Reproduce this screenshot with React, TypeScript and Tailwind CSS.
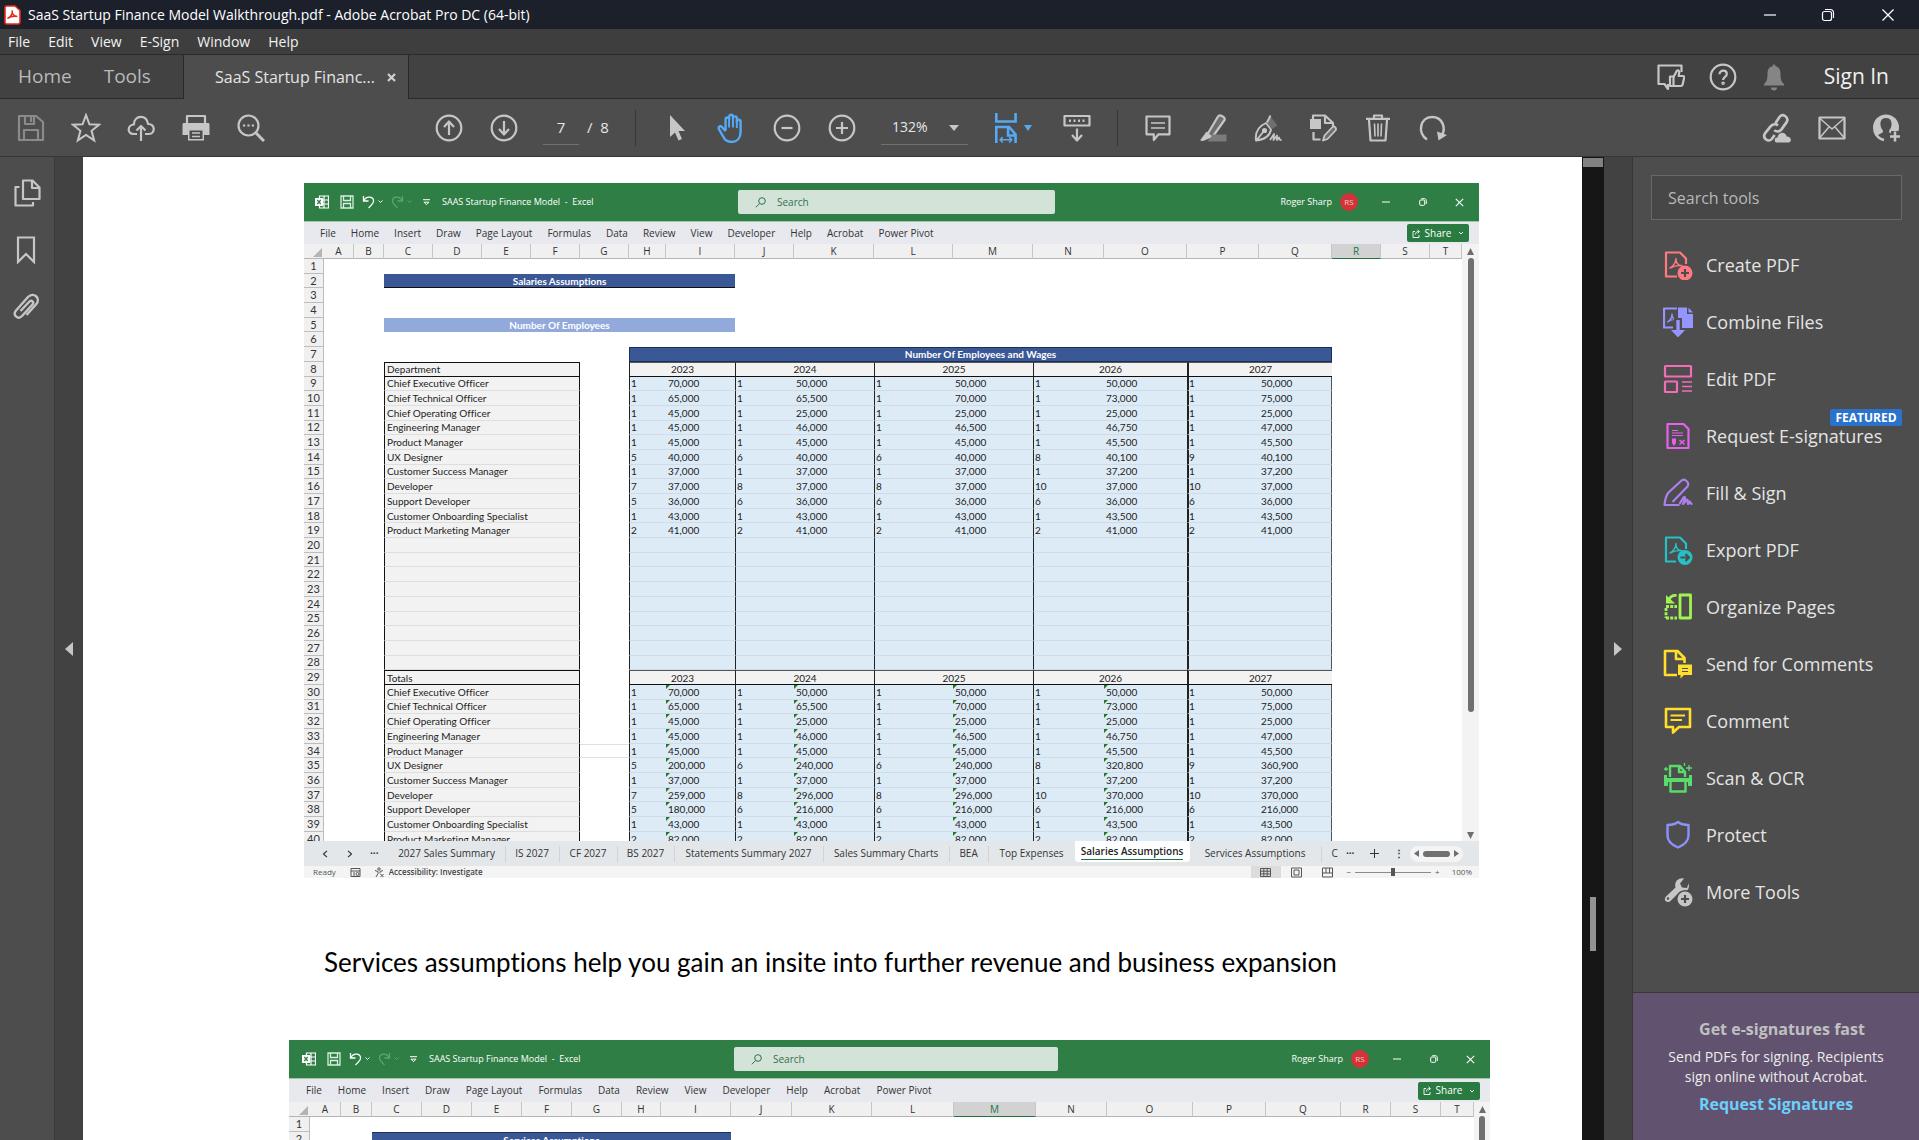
import React from 'react';

type IconProps = { children: React.ReactNode; className?: string; size?: number; box?: number };

function Icon({ children, className = '', size = 28, box = 28 }: IconProps) {
  return (
    <svg
      width={size}
      height={size}
      viewBox={`0 0 ${box} ${box}`}
      fill="none"
      stroke="currentColor"
      strokeWidth={2.2}
      strokeLinejoin="round"
      className={`shrink-0 ${className}`}
      aria-hidden="true"
    >
      {children}
    </svg>
  );
}

function ToolButton({ label, children, className = 'text-[#c6c6c6]' }: { label: string; children: React.ReactNode; className?: string }) {
  return (
    <button aria-label={label} className={`flex h-14 w-[55px] shrink-0 items-center justify-center ${className}`}>
      {children}
    </button>
  );
}

function TitleBar() {
  return (
    <header className="flex h-[29px] shrink-0 items-center bg-[#1b202b] pl-1 text-white">
      <svg width="17" height="20" viewBox="0 0 17 20" className="shrink-0" aria-hidden="true">
        <path d="M2.5 1h8.5l5 4.500V17a2 2 0 0 1-2 2H2.500a1.500 1.500 0 0 1-1.500-1.500V2.500A1.500 1.500 0 0 1 2.500 1z" fill="#fff" stroke="#e8281c" strokeWidth="1.600" />
        <path d="M3.500 13.500c3-1.500 5-5 4.800-8-.6 3.500 1.700 5.800 5 6-3-.8-6.500-.2-9.800 2z" fill="none" stroke="#e8281c" strokeWidth="1.500" />
      </svg>
      <h1 className="ml-[7px] text-sm font-normal">SaaS Startup Finance Model Walkthrough.pdf - Adobe Acrobat Pro DC (64-bit)</h1>
      <div className="ml-auto flex">
        <button aria-label="Minimize" className="flex w-[58px] items-center justify-center">
          <Icon size={14} box={14}><path d="M1 7h12" strokeWidth="1.200" /></Icon>
        </button>
        <button aria-label="Restore" className="flex w-[58px] items-center justify-center">
          <Icon size={14} box={14}>
            <rect x="1.500" y="3.500" width="9" height="9" rx="2" strokeWidth="1.200" />
            <path d="M4 1.500h5.500a3 3 0 0 1 3 3V10" strokeWidth="1.200" />
          </Icon>
        </button>
        <button aria-label="Close" className="flex w-[62px] items-center justify-center">
          <Icon size={14} box={14}><path d="M1.500 1.500l11 11M12.500 1.500l-11 11" strokeWidth="1.300" /></Icon>
        </button>
      </div>
    </header>
  );
}

const MENUS = ['File', 'Edit', 'View', 'E-Sign', 'Window', 'Help'];

function MenuBar() {
  return (
    <nav className="flex h-[26px] shrink-0 items-center gap-[18px] border-b border-[#2a2a2a] bg-[#3e3e3e] pl-2 text-sm text-[#f2f2f2]">
      {MENUS.map((m) => (
        <button key={m}>{m}</button>
      ))}
    </nav>
  );
}

function TabBar() {
  return (
    <div className="flex h-11 shrink-0 bg-[#424242] text-[19px] text-[#b9b9b9]">
      <div className="flex w-[184px] items-center gap-8 border-r border-b border-[#2a2a2a] pl-[18px]">
        <button>Home</button>
        <button>Tools</button>
      </div>
      <div className="flex w-[225px] items-center border-r border-[#2a2a2a] bg-[#4d4d4d] pl-[31px] text-base text-[#e4e4e4]">
        <span className="w-[171px]">SaaS Startup Financ...</span>
        <button aria-label="Close tab">
          <Icon size={11} box={11} className="text-[#d0d0d0]"><path d="M2 2l7 7M9 2l-7 7" /></Icon>
        </button>
      </div>
      <div className="flex flex-1 items-center justify-end border-b border-[#2a2a2a] pr-[30px] text-[#c6c6c6]">
        <button aria-label="Feedback" className="flex w-[52px] justify-center">
          <Icon>
            <path d="M11 21v5l-3.500-5H1.500V2.500h23V9" />
            <path d="M13 13.500h3.500V23H13z" />
            <path d="M16.500 14l3-5.500c.4-1.800 2.800-1.300 2.800.5l-.6 4h4.300c1 0 1.400.8 1.200 1.600l-1.600 7c-.2.900-.9 1.400-1.800 1.400h-7.300" />
          </Icon>
        </button>
        <button aria-label="Help" className="flex w-[52px] justify-center">
          <Icon>
            <circle cx="14" cy="14" r="12.300" />
            <path d="M10.500 11.200c0-4.800 7.300-4.500 7.300-.2 0 2.900-3.700 3-3.700 6" />
            <circle cx="14.100" cy="20.300" r=".7" />
          </Icon>
        </button>
        <button aria-label="Notifications" className="flex w-[50px] justify-center text-[#858585]">
          <Icon>
            <path d="M14 1.500c1 0 1.500.7 1.500 1.700 4 .8 5 4 5 8 0 5.300 1 7.600 3.500 9.800v1.500H4V21c2.500-2.200 3.500-4.500 3.500-9.800 0-4 1-7.200 5-8 0-1 .5-1.700 1.500-1.700z" fill="currentColor" stroke="none" />
            <path d="M11 24.500h6a3 3 0 0 1-6 0z" fill="currentColor" stroke="none" />
          </Icon>
        </button>
        <button className="ml-[25px] text-[21px] font-medium text-[#f0f0f0]">Sign In</button>
      </div>
    </div>
  );
}

function Toolbar() {
  return (
    <div className="flex h-[58px] shrink-0 items-center border-b border-[#363636] bg-[#4d4d4d] pl-[3px]">
      <ToolButton label="Save" className="text-[#8a8a8a]">
        <Icon>
          <path d="M2 2h17l7 6v18H2z" />
          <path d="M8 2v8h9V2M14 3v5M7 26V16h14v10" />
        </Icon>
      </ToolButton>
      <ToolButton label="Star">
        <Icon size={30}><path d="M14 2l3.200 8.500 9 .4-7 5.700 2.400 8.900L14 20.500l-7.600 5 2.400-8.900-7-5.700 9-.4z" strokeLinejoin="miter" strokeWidth="1.900" /></Icon>
      </ToolButton>
      <ToolButton label="Upload to cloud">
        <Icon>
          <path d="M10 20H6.500C-.5 20 .5 10.500 7 10.500 7 .5 20.500.5 21 10c7.500-.5 7.500 10 1 10h-4" />
          <path d="M14 27V12.500M9.500 16.500l4.500-4.500 4.500 4.500" />
        </Icon>
      </ToolButton>
      <ToolButton label="Print">
        <Icon>
          <path d="M5 9V2h18v7" />
          <path d="M2 9h24c.8 0 1.500.7 1.500 1.500V21H22v5.500H6V21H.5V10.500C.5 9.700 1.200 9 2 9z" fill="currentColor" stroke="none" />
          <path d="M7.500 16.500h13V25h-13z" fill="#4d4d4d" stroke="none" />
          <path d="M10 19h8M10 22.500h8" strokeWidth="1.500" />
        </Icon>
      </ToolButton>
      <ToolButton label="Find text">
        <Icon>
          <circle cx="11.500" cy="11.500" r="10" />
          <path d="M19 19l8 8" strokeWidth="3" />
          <path d="M6 11.500h2.200M10.400 11.500h2.200M14.800 11.500H17" />
        </Icon>
      </ToolButton>

      <div className="ml-[143px] flex items-center">
        <ToolButton label="Previous page">
          <Icon><circle cx="14" cy="14" r="12.300" /><path d="M14 21V8M9 13l5-5.500 5 5.500" /></Icon>
        </ToolButton>
        <ToolButton label="Next page">
          <Icon><circle cx="14" cy="14" r="12.300" /><path d="M14 7v13M9 15l5 5.500 5-5.500" /></Icon>
        </ToolButton>
        <input
          aria-label="Page number"
          defaultValue="7"
          className="ml-3 h-[34px] w-9 border-b border-[#717171] bg-transparent text-center text-[15px] text-[#e6e6e6] outline-none"
        />
        <span className="ml-2 w-12 text-[15px] whitespace-pre text-[#e6e6e6]">/  8</span>
      </div>

      <div className="flex h-9 items-center border-l border-[#363636] pl-[13px]">
        <ToolButton label="Select">
          <Icon><path d="M7 1v22l5-4.500 3.500 8 3.500-1.500-3.500-8H22z" fill="currentColor" stroke="none" /></Icon>
        </ToolButton>
        <ToolButton label="Hand" className="text-[#55aaf5]">
          <Icon size={30}>
            <path d="M8 16.500V6c0-2.400 3.300-2.400 3.300 0V3.500c0-2.500 3.600-2.500 3.600 0V5c0-2.400 3.600-2.400 3.600 0v3c0-2.300 3.500-2.300 3.500 0v9.500c0 6-3.500 9.500-8.500 9.500-4 0-6.500-2-8-5.500L1.800 15c-1-2.500 1.500-3.500 3-1.800L8 17" />
            <path d="M11.300 6v7.500M14.900 5v8.500M18.500 7v7" strokeWidth="1.800" />
          </Icon>
        </ToolButton>
        <ToolButton label="Zoom out">
          <Icon><circle cx="14" cy="14" r="12.300" /><path d="M8.500 14h11" /></Icon>
        </ToolButton>
        <ToolButton label="Zoom in">
          <Icon><circle cx="14" cy="14" r="12.300" /><path d="M8 14h12M14 8v12" /></Icon>
        </ToolButton>
        <div className="relative ml-3 h-[34px] w-[87px] border-b border-[#717171]">
          <select aria-label="Zoom level" className="h-full w-full appearance-none bg-transparent pl-[11px] text-sm text-[#e6e6e6]">
            <option>132%</option>
          </select>
          <svg width="10" height="6" viewBox="0 0 10 6" className="pointer-events-none absolute top-[14px] right-[9px]" aria-hidden="true">
            <path d="M0 0h10L5 6z" fill="#c6c6c6" />
          </svg>
        </div>
        <button aria-label="Fit width" className="ml-6 flex w-[57px] items-center gap-[6px] text-[#55aaf5]">
          <Icon size={30}>
            <path d="M4 0v8h18V0M4 28V13h12l6 7v8M15 14v7h7" strokeWidth="2.400" strokeLinejoin="miter" />
            <path d="M7.500 25h11M10 22.500L7.500 25l2.500 2.500M16 22.500l2.500 2.500-2.500 2.500" strokeWidth="1.500" />
          </Icon>
          <svg width="8" height="6" viewBox="0 0 8 6" className="-ml-1" aria-hidden="true"><path d="M0 0h8L4 6z" fill="currentColor" /></svg>
        </button>
        <ToolButton label="Page display">
          <Icon>
            <path d="M1.500 2h25v9.500h-25z" />
            <path d="M6 6.800h2M10.500 6.800h2M15 6.800h2M19.500 6.800h2" strokeWidth="2.500" />
            <path d="M14 14.500V26M9 21l5 5.500 5-5.500" />
          </Icon>
        </ToolButton>
      </div>

      <div className="ml-[13px] flex h-9 items-center border-l border-[#363636] pl-3">
        <ToolButton label="Comment">
          <Icon>
            <path d="M2.500 2.500h23v17.800h-11L9.800 26v-5.700H2.500z" />
            <path d="M7 9h14M7 14h14" strokeWidth="1.600" />
          </Icon>
        </ToolButton>
        <ToolButton label="Highlight">
          <Icon>
            <path d="M8 21l11-18.500c1.500-2.500 8 .5 6.500 3.500L13.500 23" fill="#6f6f6f" />
            <path d="M7.500 17.500L1 26.500l3 .5 10-4z" fill="currentColor" stroke="none" />
            <path d="M14 20.500h13.500V27.500H8.500z" fill="#7b7b7b" stroke="none" />
          </Icon>
        </ToolButton>
        <ToolButton label="Sign">
          <Icon>
            <path d="M2 26.500C1 19 3 13 12 9l5 6.500c-1 6-5.500 10-15 11zM3 25.500l7-8.500" strokeWidth="1.900" />
            <circle cx="10.500" cy="16.500" r="1.500" fill="currentColor" />
            <path d="M13 8.500l3.500-6 7 9L18 15z" fill="#6f6f6f" stroke="none" />
            <path d="M13 8.500l3.500-7" strokeWidth="1.900" />
            <path d="M16 26l4-6-.5 6 3.500-4.500v4.500l2-2.500c0 2 .8 2.500 2.500 2.500" strokeWidth="1.800" />
          </Icon>
        </ToolButton>
        <ToolButton label="Stamp">
          <Icon>
            <path d="M1 5h11v10H1z" fill="currentColor" stroke="none" />
            <path d="M4 5V1.500h12L24 9v3M16 2v7h7M4.500 18v7.500h7" />
            <path d="M14 26.500l1.500-5 8-8.500c2-1.500 4.500 1.500 3 3.500l-8 8.500z" fill="#6f6f6f" strokeWidth="1.800" />
          </Icon>
        </ToolButton>
        <ToolButton label="Delete">
          <Icon>
            <path d="M2 4.800h24M10 4V1.500h8V4" />
            <path d="M5 6l1.500 20.500h15L23 6" />
            <path d="M10.500 9.500l.5 13M14 9.500v13M17.500 9.500l-.5 13" strokeWidth="1.600" />
          </Icon>
        </ToolButton>
        <ToolButton label="Rotate">
          <Icon>
            <path d="M8 25.500C-2 19 1 3 13 3c10.500 0 14.500 11 9.500 19" strokeWidth="2.500" />
            <path d="M18 17.500l10 3.500-8.500 5.500z" fill="currentColor" stroke="none" />
          </Icon>
        </ToolButton>
      </div>

      <div className="ml-auto flex items-center pr-[5px]">
        <ToolButton label="Share link">
          <Icon size={30}>
            <path d="M12.500 9.500l4-6c3-3.500 9 .5 6.500 5l-5 7c-2 2.500-5 2-6.500.5" strokeWidth="2.500" />
            <path d="M15 11.500c-2-1.500-5-1.500-7 1L2.800 19c-2.800 4.500 3.400 9 6.500 5l2.500-3.500" strokeWidth="2.500" />
            <path d="M13.500 27.500c-2.500-.5-2-5 1-4.500.5-5.500 7.500-6 8.500-1 5 0 5 5.500 1.500 5.500z" fill="currentColor" stroke="none" />
          </Icon>
        </ToolButton>
        <ToolButton label="Send by email">
          <Icon>
            <path d="M1.500 3.500h25v21h-25z" />
            <path d="M2 4.500l12 10.500L26 4.500M2 23.500l9-10.500M26 23.500L17 13" strokeWidth="1.500" />
          </Icon>
        </ToolButton>
        <ToolButton label="Invite people">
          <Icon>
            <circle cx="13" cy="13.500" r="13" fill="currentColor" stroke="none" />
            <path d="M13 4c4.500 0 6 3.500 5.500 7-.3 2.200-1 4-2.300 5.300v2.200l2.800 1.300V28H9c-2-.8-4.500-2.500-6-5 1.500-2.200 4-3.200 6.800-4.500v-2.200C8.500 15 7.800 13.200 7.500 11 7 7.500 8.500 4 13 4z" fill="#4d4d4d" stroke="none" />
            <path d="M18 17h10v11H15l3-5z" fill="#4d4d4d" stroke="none" />
            <path d="M1.500 17c1.500 4.500 4.500 8 9.500 9" strokeWidth="2.400" />
            <path d="M22 17.500v10M17 22.500h10" strokeWidth="2.500" />
          </Icon>
        </ToolButton>
      </div>
    </div>
  );
}

function LeftRail() {
  return (
    <aside className="flex shrink-0">
      <div className="flex w-[55px] flex-col items-center gap-[29px] border-r border-[#3a3a3a] bg-[#4d4d4d] pt-[22px] text-[#c6c6c6]">
        <button aria-label="Page thumbnails">
          <Icon>
            <path d="M10 1.500h9.500l7 7V20H10z" />
            <path d="M19 2v7h7M6.500 8H2.500v18.500H20V23" />
          </Icon>
        </button>
        <button aria-label="Bookmarks">
          <Icon><path d="M5 1.500h16V26l-8-8-8 8z" strokeLinejoin="miter" /></Icon>
        </button>
        <button aria-label="Attachments">
          <Icon>
            <path d="M8.500 18L17.500 8.500c2-2 5 .8 3 3L10 23c-4 4-10-1-6-5.500L16 4c5.500-5.500 13.500 1 8 7.500L14.500 22" transform="translate(-1 0)" strokeWidth="2.400" />
          </Icon>
        </button>
      </div>
      <button aria-label="Expand navigation pane" className="flex w-7 items-center justify-center bg-[#424242]">
        <svg width="8" height="14" viewBox="0 0 8 14" aria-hidden="true"><path d="M8 0v14L0 7z" fill="#c6c6c6" /></svg>
      </button>
    </aside>
  );
}

/* ---------- the workbook shown on the page ---------- */

const RIBBON = ['File', 'Home', 'Insert', 'Draw', 'Page Layout', 'Formulas', 'Data', 'Review', 'View', 'Developer', 'Help', 'Acrobat', 'Power Pivot'];
const LETTERS = 'ABCDEFGHIJKLMNOPQRST'.split('');

type WindowProps = {
  widths: number[];
  selected: string;
  leftClass: string;
  searchClass: string;
  ribbonClass: string;
  bodyClass: string;
  tableClass: string;
  thumbClass: string;
  children: React.ReactNode;
};

function ExcelWindow({ widths, selected, leftClass, searchClass, ribbonClass, bodyClass, tableClass, thumbClass, children }: WindowProps) {
  return (
    <>
      <div className="flex h-[38px] items-center bg-[#2f7e45] text-[10px] text-white">
        <div className={`flex items-center ${leftClass}`}>
          <svg width="14" height="14" viewBox="0 0 14 14" aria-hidden="true">
            <path d="M4.500 1h9v12h-9zM9 1v12M4.500 5h9M4.500 9h9" fill="none" stroke="#fff" strokeWidth="1.200" />
            <rect x="0" y="3" width="8" height="8" fill="#fff" />
            <path d="M2.300 5l3.400 4M5.700 5L2.300 9" stroke="#2f7e45" strokeWidth="1.200" />
          </svg>
          <svg width="14" height="14" viewBox="0 0 14 14" className="ml-[11px]" aria-hidden="true">
            <path d="M1 1h12v12H1zM3.500 1v4.500h7V1M3.500 13V8.500h7V13" fill="none" stroke="#d8efe0" strokeWidth="1.300" />
          </svg>
          <svg width="22" height="14" viewBox="0 0 22 14" className="ml-2" aria-hidden="true">
            <path d="M1.500 1v5h5M1.500 6c3.500-6.500 10.500-4 10 .5-.3 2-2 3.500-5 6.500" fill="none" stroke="#fff" strokeWidth="1.300" />
            <path d="M16.500 5.500l2 2 2-2" fill="none" stroke="#fff" />
          </svg>
          <svg width="22" height="14" viewBox="0 0 22 14" className="ml-[7px]" aria-hidden="true">
            <path d="M11.500 1v5h-5M11.500 6C8-.5 1 2 1.500 6.500c.3 2 2 3.500 5 6.500" fill="none" stroke="#62a275" strokeWidth="1.300" />
            <path d="M16.500 5.500l2 2 2-2" fill="none" stroke="#62a275" />
          </svg>
          <svg width="7" height="7" viewBox="0 0 7 7" className="ml-[10px]" aria-hidden="true">
            <path d="M0 .7h7M1 3.200h5L3.500 5.700z" fill="none" stroke="#fff" />
          </svg>
          <span className="ml-3 text-[9px] whitespace-pre">SAAS Startup Finance Model  -  Excel</span>
        </div>
        <label className={`flex h-6 items-center gap-[11px] rounded-xs bg-[#d3e3d8] pl-[17px] text-[#33704a] ${searchClass}`}>
          <Icon size={11} box={11}><circle cx="7" cy="4" r="3.300" strokeWidth="1" /><path d="M4.600 6.500L.8 10.300" strokeWidth="1" /></Icon>
          <input aria-label="Search workbook" placeholder="Search" className="min-w-0 flex-1 bg-transparent outline-none placeholder:text-[#33704a]" />
        </label>
        <div className="ml-auto flex items-center">
          <span className="text-[9px]">Roger Sharp</span>
          <span className="ml-2 flex size-[18px] items-center justify-center rounded-full bg-[#d13438] text-[8px] text-[#f6c9ca]">RS</span>
          <button aria-label="Minimize workbook" className="flex w-[38px] justify-center pl-[18px]">
            <Icon size={8} box={8}><path d="M0 4h8" strokeWidth="1" /></Icon>
          </button>
          <button aria-label="Restore workbook" className="flex w-9 justify-center pl-[18px]">
            <Icon size={8} box={8}><rect x=".7" y="2" width="5" height="5.300" rx="1" strokeWidth="1" /><path d="M2.300.7h3.200c1 0 1.800.8 1.800 1.800V6" strokeWidth="1" /></Icon>
          </button>
          <button aria-label="Close workbook" className="mr-[10px] flex w-[37px] justify-center pl-[18px]">
            <Icon size={9} box={9}><path d="M.8.8l7.400 7.400M8.200.8L.8 8.200" strokeWidth="1.100" /></Icon>
          </button>
        </div>
      </div>
      <div className={`flex items-center border-t border-[#9fc7ab] bg-[#e7e9ee] text-[10px] text-[#333] ${ribbonClass}`}>
        {RIBBON.map((r) => (
          <button key={r} className="whitespace-nowrap">{r}</button>
        ))}
        <button className="mr-[10px] ml-auto flex h-[18px] w-[62px] items-center justify-center gap-1 rounded-xs bg-[#2a7b41] text-white">
          <Icon size={9} box={9}><path d="M3 2.500H1v6h6V6M3.500 5.500c0-2 1-3 3.500-3M5.500.8L7.500 2.600 5.500 4.400" strokeWidth=".9" /></Icon>
          Share
          <Icon size={6} box={6} className="ml-[3px]"><path d="M1 2l2 2 2-2" strokeWidth="1" /></Icon>
        </button>
      </div>
      <div className={`flex overflow-hidden ${bodyClass}`}>
        <table
          className={`table-fixed border-separate border-spacing-0 font-['Lato'] text-[10px] leading-3 text-[#222] [font-variant-ligatures:none] ${tableClass}`}
        >
          <colgroup>
            {widths.map((w, i) => (
              <col key={i} style={{ width: w }} />
            ))}
          </colgroup>
          <thead>
            <tr className="h-[15px]">
              <th className="border-b border-[#b5b5b5] bg-[#f0f0f0] p-0">
                <svg width="9" height="9" viewBox="0 0 9 9" className="mt-[2px] mr-[2px] ml-auto" aria-hidden="true"><path d="M9 0v9H0z" fill="#b4b4b4" /></svg>
              </th>
              {LETTERS.map((l) => (
                <th
                  key={l}
                  scope="col"
                  className={`border-r border-b p-0 font-['Open_Sans'] text-[10px] font-normal ${
                    l === selected ? 'border-r-[#c6c6c6] border-b-[#217346] bg-[#d2d2d2] text-[#217346]' : 'border-r-[#c6c6c6] border-b-[#b5b5b5] bg-[#f0f0f0] text-[#333]'
                  }`}
                >
                  {l}
                </th>
              ))}
            </tr>
          </thead>
          <tbody className="*:h-[14px]">{children}</tbody>
        </table>
        <div className="flex flex-1 flex-col items-center bg-[#f3f3f3] pt-1">
          <svg width="7" height="7" viewBox="0 0 7 7" className="shrink-0" aria-hidden="true"><path d="M3.500 0L7 7H0z" fill="#6d6d6d" /></svg>
          <div className={`mt-[3px] w-[6px] shrink-0 rounded-full bg-[#707070] ${thumbClass}`} />
          <svg width="7" height="7" viewBox="0 0 7 7" className="mt-auto mb-[2px] shrink-0" aria-hidden="true"><path d="M0 0h7L3.500 7z" fill="#6d6d6d" /></svg>
        </div>
      </div>
    </>
  );
}

function RowHead({ n }: { n: number }) {
  return (
    <th scope="row" className="border-r border-b border-[#bdbdbd] bg-[#f0f0f0] p-0 text-center text-[11px] font-normal text-[#333]">
      {n}
    </th>
  );
}

function BlankRow({ n }: { n: number }) {
  return (
    <tr>
      <RowHead n={n} />
      <td colSpan={20} className="p-0" />
    </tr>
  );
}

function BannerRow({ n, text, className }: { n: number; text: string; className: string }) {
  return (
    <tr>
      <RowHead n={n} />
      <td colSpan={2} className="p-0" />
      <th colSpan={7} className={`p-0 text-center font-bold text-white ${className}`}>{text}</th>
      <td colSpan={11} className="p-0" />
    </tr>
  );
}

const YEARS = ['2023', '2024', '2025', '2026', '2027'];

function YearRow({ n, label }: { n: number; label: string }) {
  return (
    <tr>
      <RowHead n={n} />
      <td colSpan={2} className="p-0" />
      <th colSpan={4} className="border border-[#111] bg-[#f2f2f2] p-0 pl-[2px] text-left font-normal">{label}</th>
      <td className="p-0" />
      {YEARS.map((y) => (
        <th
          key={y}
          colSpan={2}
          className={`border-y border-t-[#555] border-b-[#111] border-l-[#222] bg-[#f2f2f2] p-0 text-center font-normal ${y === '2027' ? 'border-l-2' : 'border-l'}`}
        >
          {y}
        </th>
      ))}
      <td colSpan={3} className="p-0" />
    </tr>
  );
}

type Staff = [string, number[], string[], string[]];

// name, head count per year, wage per year, total per year
const STAFF: Staff[] = [
  ['Chief Executive Officer', [1, 1, 1, 1, 1], ['70,000', '50,000', '50,000', '50,000', '50,000'], ['70,000', '50,000', '50,000', '50,000', '50,000']],
  ['Chief Technical Officer', [1, 1, 1, 1, 1], ['65,000', '65,500', '70,000', '73,000', '75,000'], ['65,000', '65,500', '70,000', '73,000', '75,000']],
  ['Chief Operating Officer', [1, 1, 1, 1, 1], ['45,000', '25,000', '25,000', '25,000', '25,000'], ['45,000', '25,000', '25,000', '25,000', '25,000']],
  ['Engineering Manager', [1, 1, 1, 1, 1], ['45,000', '46,000', '46,500', '46,750', '47,000'], ['45,000', '46,000', '46,500', '46,750', '47,000']],
  ['Product Manager', [1, 1, 1, 1, 1], ['45,000', '45,000', '45,000', '45,500', '45,500'], ['45,000', '45,000', '45,000', '45,500', '45,500']],
  ['UX Designer', [5, 6, 6, 8, 9], ['40,000', '40,000', '40,000', '40,100', '40,100'], ['200,000', '240,000', '240,000', '320,800', '360,900']],
  ['Customer Success Manager', [1, 1, 1, 1, 1], ['37,000', '37,000', '37,000', '37,200', '37,200'], ['37,000', '37,000', '37,000', '37,200', '37,200']],
  ['Developer', [7, 8, 8, 10, 10], ['37,000', '37,000', '37,000', '37,000', '37,000'], ['259,000', '296,000', '296,000', '370,000', '370,000']],
  ['Support Developer', [5, 6, 6, 6, 6], ['36,000', '36,000', '36,000', '36,000', '36,000'], ['180,000', '216,000', '216,000', '216,000', '216,000']],
  ['Customer Onboarding Specialist', [1, 1, 1, 1, 1], ['43,000', '43,000', '43,000', '43,500', '43,500'], ['43,000', '43,000', '43,000', '43,500', '43,500']],
  ['Product Marketing Manager', [2, 2, 2, 2, 2], ['41,000', '41,000', '41,000', '41,000', '41,000'], ['82,000', '82,000', '82,000', '82,000', '82,000']],
];

function StaffRow({ n, name = '', counts = [], amounts = [], flagged = false }: { n: number; name?: string; counts?: number[]; amounts?: string[]; flagged?: boolean }) {
  return (
    <tr>
      <RowHead n={n} />
      <td colSpan={2} className="p-0" />
      <td colSpan={4} className="border-x border-b border-x-[#111] border-b-[#dedede] bg-[#f2f2f2] p-0 pl-[2px] whitespace-nowrap">{name}</td>
      <td className={n === 34 ? 'border-y border-[#e0e0e0] p-0' : 'p-0'} />
      {YEARS.map((y, i) => (
        <React.Fragment key={y}>
          <td className={`border-b border-b-[#cfdbe6] border-l-[#222] bg-[#ddebf7] p-0 ${i === 4 ? 'border-l-2' : 'border-l pl-px'}`}>{counts[i]}</td>
          <td className={`relative border-b border-b-[#cfdbe6] bg-[#ddebf7] p-0 pl-[2px] ${i === 4 ? 'border-r border-r-[#555]' : ''}`}>
            {flagged && i < 4 && (
              <svg width="4" height="4" viewBox="0 0 4 4" className="absolute top-0 left-0" aria-hidden="true"><path d="M0 0h4L0 4z" fill="#1e7b1e" /></svg>
            )}
            {amounts[i]}
          </td>
        </React.Fragment>
      ))}
      <td colSpan={3} className="p-0" />
    </tr>
  );
}

function SheetTabs() {
  const tab = 'flex h-4 items-center whitespace-nowrap border-r border-[#d0d4d7]';
  return (
    <div className="flex h-[25px] items-center bg-[#e4e7ea] text-[10px] text-[#333]">
      <button aria-label="Previous sheet" className="ml-[17px]"><Icon size={8} box={8}><path d="M6 .8L2.500 4 6 7.200" strokeWidth="1.100" /></Icon></button>
      <button aria-label="Next sheet" className="ml-[17px]"><Icon size={8} box={8}><path d="M2 .8L5.500 4 2 7.200" strokeWidth="1.100" /></Icon></button>
      <button aria-label="More sheets" className="ml-4 text-[10px] font-bold">···</button>
      <div className="ml-[10px] flex flex-1 items-center">
        <button className={`${tab} w-[117px] justify-center`}>2027 Sales Summary</button>
        <button className={`${tab} w-[54px] justify-center`}>IS 2027</button>
        <button className={`${tab} w-[58px] justify-center`}>CF 2027</button>
        <button className={`${tab} w-[57px] justify-center`}>BS 2027</button>
        <button className={`${tab} w-[149px] justify-center`}>Statements Summary 2027</button>
        <button className={`${tab} w-[126px] justify-center`}>Sales Summary Charts</button>
        <button className={`${tab} w-[39px] justify-center`}>BEA</button>
        <button className="flex h-4 w-[86px] items-center justify-center whitespace-nowrap">Top Expenses</button>
        <button className="mb-1 flex h-[21px] w-[115px] items-center justify-center rounded-b-sm bg-white font-semibold whitespace-nowrap text-[#222]">
          <span className="border-b border-[#217346] leading-4">Salaries Assumptions</span>
        </button>
        <button className={`${tab} w-[132px] justify-center`}>Services Assumptions</button>
        <span className="ml-[10px]">C</span>
        <span className="ml-2 font-bold">···</span>
        <button aria-label="Add sheet" className="ml-4"><Icon size={9} box={9}><path d="M0 4.500h9M4.500 0v9" strokeWidth="1" /></Icon></button>
        <button aria-label="Sheet options" className="ml-[15px] font-bold">⋮</button>
        <div className="mr-[16px] ml-auto flex h-4 w-[53px] items-center justify-center gap-1 rounded-full bg-[#f4f4f4]">
          <svg width="5" height="7" viewBox="0 0 5 7" aria-hidden="true"><path d="M5 0v7L0 3.500z" fill="#6d6d6d" /></svg>
          <div className="h-[6px] w-[27px] rounded-full bg-[#707070]" />
          <svg width="5" height="7" viewBox="0 0 5 7" aria-hidden="true"><path d="M0 0v7l5-3.500z" fill="#6d6d6d" /></svg>
        </div>
      </div>
    </div>
  );
}

function StatusBar() {
  return (
    <div className="flex h-3 items-center overflow-hidden bg-[#f4f4f4] pl-[9px] text-[8px] text-[#555]">
      <span>Ready</span>
      <Icon size={11} box={11} className="ml-[14px]"><path d="M1 1.500h9v8H1zM1 4h9M3 6h2M3 8h2" strokeWidth="1" /><circle cx="7.500" cy="7" r="1.500" strokeWidth="1" /></Icon>
      <Icon size={11} box={11} className="ml-[13px]"><circle cx="5" cy="2" r="1.200" strokeWidth="1" /><path d="M1 3.500l3 1v2L2 10M9 3.500l-3 1v2M6.500 7l3 3M9.500 7l-3 3" strokeWidth="1" /></Icon>
      <span className="ml-1 font-semibold text-[#444]">Accessibility: Investigate</span>
      <div className="ml-auto flex items-center pr-[7px]">
        <span className="flex h-3 w-[30px] items-center justify-center bg-[#dcdcdc]">
          <Icon size={11} box={11}><path d="M.5 1.500h10v8H.5zM.5 4.200h10M.5 6.900h10M3.800 1.500v8M7.200 1.500v8" strokeWidth="1" /></Icon>
        </span>
        <span className="flex w-[31px] justify-center">
          <Icon size={11} box={11}><path d="M.5 1h10v9H.5zM3 3h5v5H3z" strokeWidth="1" /></Icon>
        </span>
        <span className="flex w-[31px] justify-center">
          <Icon size={11} box={11}><path d="M.5 1h10v9H.5zM4 1v5M7.500 1v5M1 6h9" strokeWidth="1" /></Icon>
        </span>
        <span className="ml-1">−</span>
        <div className="mx-1 flex h-2 w-[76px] items-center justify-center">
          <div className="h-px w-9 bg-[#8a8a8a]" />
          <div className="h-2 w-1 bg-[#555]" />
          <div className="h-px w-9 bg-[#8a8a8a]" />
        </div>
        <span>+</span>
        <span className="ml-3">100%</span>
      </div>
    </div>
  );
}

const SALARY_WIDTHS = [20, 30, 30, 49, 49, 49, 49, 49, 37, 69, 59, 80, 79, 80, 71, 83, 72, 73, 49, 49, 32];
const SERVICE_WIDTHS = [21, 31, 31, 50, 50, 50, 50, 50, 39, 70, 61, 80, 82, 82, 71, 86, 73, 75, 50, 50, 33];

function SalariesWorkbook() {
  return (
    <section className="ml-[221px] w-[1175px]">
      <ExcelWindow
        widths={SALARY_WIDTHS}
        selected="R"
        leftClass="w-[434px] pl-[11px]"
        searchClass="w-[317px]"
        ribbonClass="h-[23px] gap-[15px] pl-4"
        bodyClass="h-[597px]"
        tableClass="h-[603px] w-[1158px]"
        thumbClass="h-[454px]"
      >
        <BlankRow n={1} />
        <BannerRow n={2} text="Salaries Assumptions" className="border-b border-[#111] bg-[#3a5796]" />
        <BlankRow n={3} />
        <BlankRow n={4} />
        <BannerRow n={5} text="Number Of Employees" className="bg-[#92a9dc]" />
        <BlankRow n={6} />
        <tr>
          <RowHead n={7} />
          <td colSpan={7} className="p-0" />
          <th colSpan={10} className="border border-[#1c2f5c] bg-[#3a5796] p-0 text-center font-bold text-white">Number Of Employees and Wages</th>
          <td colSpan={3} className="p-0" />
        </tr>
        <YearRow n={8} label="Department" />
        {STAFF.map(([name, counts, wages], i) => (
          <StaffRow key={name} n={9 + i} name={name} counts={counts} amounts={wages} />
        ))}
        {[20, 21, 22, 23, 24, 25, 26, 27, 28].map((n) => (
          <StaffRow key={n} n={n} />
        ))}
        <YearRow n={29} label="Totals" />
        {STAFF.map(([name, counts, , totals], i) => (
          <StaffRow key={name} n={30 + i} name={name} counts={counts} amounts={totals} flagged />
        ))}
      </ExcelWindow>
      <SheetTabs />
      <StatusBar />
    </section>
  );
}

function ServicesWorkbook() {
  return (
    <section className="ml-[206px] w-[1201px]">
      <ExcelWindow
        widths={SERVICE_WIDTHS}
        selected="M"
        leftClass="w-[445px] pl-[13px]"
        searchClass="w-[324px]"
        ribbonClass="h-6 gap-4 pl-[17px]"
        bodyClass="h-[598px]"
        tableClass="h-[105px] w-[1185px]"
        thumbClass="h-[455px]"
      >
        <BlankRow n={1} />
        <BannerRow n={2} text="Services Assumptions" className="border-t border-[#1c2f5c] bg-[#3a5796]" />
        {[3, 4, 5, 6].map((n) => (
          <BlankRow key={n} n={n} />
        ))}
      </ExcelWindow>
    </section>
  );
}

function DocumentPane() {
  return (
    <main className="flex min-w-0 flex-1">
      <div className="min-w-0 flex-1 overflow-hidden bg-white pt-[26px]">
        <SalariesWorkbook />
        <p className="mt-[66px] ml-[241px] h-24 font-['Lato'] text-[26px] leading-9 whitespace-nowrap text-black [font-variant-ligatures:none]">
          Services assumptions help you gain an insite into further revenue and business expansion
        </p>
        <ServicesWorkbook />
      </div>
      <div className="flex w-[22px] flex-col items-center bg-[#161616] pt-px">
        <div className="h-[9px] w-5 bg-[#828282]" />
        <div className="mt-[730px] h-[54px] w-[6px] bg-[#939393]" />
      </div>
    </main>
  );
}

const PDF_MARK = 'M7 18c3-1.500 6-5.500 6-9.500-.2 4 2 7 6 7.300-4-.6-8 .2-12 2.200z';

const TOOLS: { name: string; color: string; icon: React.ReactNode; featured?: boolean }[] = [
  {
    name: 'Create PDF',
    color: 'text-[#ff7a80]',
    icon: (
      <>
        <path d="M14 26.500H3V2.500h14l6 6V14" />
        <path d={PDF_MARK} strokeWidth="1.400" />
        <circle cx="22" cy="23" r="7.500" fill="currentColor" stroke="none" />
        <path d="M18 23h8M22 19v8" stroke="#4d4d4d" />
      </>
    ),
  },
  {
    name: 'Combine Files',
    color: 'text-[#9694ff]',
    icon: (
      <>
        <path d="M10 20.500H1V1.500h13" />
        <path d="M4.500 15c2.500-1.500 4.500-4.500 4.500-8 0 3 1.500 5 4 5.500-3-.3-5.500.5-8.500 2.500z" strokeWidth="1.300" />
        <path d="M15 .5h9V7h6v14H15z" fill="currentColor" stroke="none" />
        <path d="M25.500.5L30 5.500h-4.500z" fill="currentColor" stroke="none" />
        <path d="M11 11h8v12h-8z" fill="#4d4d4d" stroke="none" />
        <path d="M13.300 13h3.400v10H22l-7 7.500L8 23h5.300z" fill="currentColor" stroke="none" />
      </>
    ),
  },
  {
    name: 'Edit PDF',
    color: 'text-[#f46cb8]',
    icon: (
      <>
        <rect x="2" y="2" width="26" height="10.500" rx=".5" />
        <rect x="2" y="17.500" width="12" height="10.500" rx=".5" />
        <path d="M19 18h10M19 22.500h10M19 27h10" strokeWidth="1.400" />
      </>
    ),
  },
  {
    name: 'Request E-signatures',
    color: 'text-[#e662ee]',
    featured: true,
    icon: (
      <>
        <path d="M4.500 3h16l5 5v19h-21z" />
        <path d="M9 9.500h6M9 12h11M9 14.500h11" strokeWidth="1.200" />
        <path d="M9 17.500h4V22l-2 3-2-3z" fill="currentColor" stroke="none" />
        <path d="M16.500 19l5 4.500M21.500 19l-5 4.500" strokeWidth="1.600" />
      </>
    ),
  },
  {
    name: 'Fill & Sign',
    color: 'text-[#ad7ff0]',
    icon: (
      <>
        <path d="M16.500 27H1.500c.5-6 2-10 4-12.500L18 3c3-3.500 9 1 6.500 5.500L9.500 24" />
        <path d="M16.500 26l4-6.500c2-1.500 2 1-.5 6.500l4-4.500c1.500 0 0 4 1 4.500l2-2.500c0 2 .8 2.500 2.500 2.500" />
      </>
    ),
  },
  {
    name: 'Export PDF',
    color: 'text-[#26c0c7]',
    icon: (
      <>
        <path d="M13 26.500H3V2.500h14l6 6V14" />
        <path d={PDF_MARK} strokeWidth="1.400" />
        <circle cx="22" cy="22.500" r="7.500" fill="currentColor" stroke="none" />
        <path d="M17.500 22.500h8M22.500 19l3.500 3.500-3.500 3.500" stroke="#4d4d4d" />
      </>
    ),
  },
  {
    name: 'Organize Pages',
    color: 'text-[#a2f550]',
    icon: (
      <>
        <rect x="17" y="3" width="10.500" height="23" strokeWidth="2.800" />
        <path d="M13.500 3.500C9 3 7 5 6 8" strokeWidth="2.800" />
        <path d="M3 3v8.500h9z" fill="currentColor" stroke="none" />
        <path d="M3 14.500h11M3 26h11" strokeWidth="2.800" strokeDasharray="3 1.200" />
        <path d="M3 16v10" strokeWidth="2.800" strokeDasharray="3 1.200" />
      </>
    ),
  },
  {
    name: 'Send for Comments',
    color: 'text-[#ffde2e]',
    icon: (
      <>
        <path d="M14 26H2V2h12.500l7 7v5M13 2.500V10h8" strokeWidth="2.600" />
        <path d="M15 15.500h14V26h-8l-3.500 3.500V26H15z" fill="currentColor" stroke="none" />
        <path d="M19 19.500h6M19 22.500h6" stroke="#4d4d4d" strokeWidth="1.200" />
      </>
    ),
  },
  {
    name: 'Comment',
    color: 'text-[#ffde2e]',
    icon: (
      <>
        <path d="M3 3h24v18H16l-6 5.500V21H3z" strokeWidth="2.600" />
        <path d="M7.500 9.500H22M7.500 14H19" strokeWidth="1.800" />
      </>
    ),
  },
  {
    name: 'Scan & OCR',
    color: 'text-[#58dd6c]',
    icon: (
      <>
        <path d="M7 14V3h10l5 6v5M16 3.500V9h5" strokeWidth="2.400" />
        <path d="M1 12h3v3h22v-3h3v11h-4v-4H5v4H1z" fill="currentColor" stroke="none" />
        <path d="M7.500 19v9.500h15V19" strokeWidth="2.400" />
        <path d="M26 2v6M23 5h6M3 4v4M1 6h4M21.500 0v3" strokeWidth="1.300" />
      </>
    ),
  },
  {
    name: 'Protect',
    color: 'text-[#8f90fa]',
    icon: <path d="M15 2c3 2.300 6 3 10.500 3v10.500c0 6-4.500 9.500-10.500 12-6-2.500-10.500-6-10.500-12V5C9 5 12 4.300 15 2z" strokeWidth="2.400" />,
  },
  {
    name: 'More Tools',
    color: 'text-[#c6c6c6]',
    icon: (
      <>
        <path d="M21 1.500l-4 5 2 4 5 .5 1.500-4.500c2 6-3 10-8.500 8L7.500 24c-3 3-8-1-4.500-4.500l9.500-9C11 5 15 .5 21 1.500z" fill="currentColor" stroke="none" />
        <circle cx="5" cy="21.500" r="1.200" fill="#4d4d4d" stroke="none" />
        <circle cx="22" cy="22" r="9" fill="#4d4d4d" stroke="none" />
        <circle cx="22" cy="22" r="7.500" fill="currentColor" stroke="none" />
        <path d="M18 22h8M22 18v8" stroke="#4d4d4d" />
      </>
    ),
  },
];

function ToolsPane() {
  return (
    <aside className="flex shrink-0">
      <button aria-label="Collapse tools pane" className="flex w-7 items-center justify-center bg-[#424242]">
        <svg width="8" height="14" viewBox="0 0 8 14" aria-hidden="true"><path d="M0 0v14l8-7z" fill="#c6c6c6" /></svg>
      </button>
      <div className="flex w-[287px] flex-col border-l border-[#383838] bg-[#4d4d4d]">
        <input
          aria-label="Search tools"
          placeholder="Search tools"
          className="mt-[18px] mr-[17px] ml-[18px] h-[45px] shrink-0 border border-[#686868] bg-[#474747] px-4 text-base text-white outline-none placeholder:text-[#b8b8b8]"
        />
        <ul className="mt-4">
          {TOOLS.map((t) => (
            <li key={t.name}>
              <a href="#" className="relative flex h-[57px] items-center gap-[13px] pl-[30px] text-lg text-[#e4e4e4]">
                <Icon size={30} box={30} className={t.color}>{t.icon}</Icon>
                {t.name}
                {t.featured && (
                  <span className="absolute top-[2px] right-[17px] flex h-[17px] w-[72px] items-center justify-center rounded-xs bg-[#2b72cb] text-xs font-bold text-white">FEATURED</span>
                )}
              </a>
            </li>
          ))}
        </ul>
        <div className="mt-auto flex h-[148px] shrink-0 flex-col items-center border-t border-[#383838] bg-[#61536f] pt-6 text-center">
          <h2 className="pl-3 text-base leading-6 font-bold text-[#c0c0c0]">Get e-signatures fast</h2>
          <p className="mt-[6px] text-sm leading-5 text-[#ececec]">
            Send PDFs for signing. Recipients
            <br />
            sign online without Acrobat.
          </p>
          <a href="#" className="mt-[5px] text-base leading-6 font-bold text-[#6cd0fb]">Request Signatures</a>
        </div>
      </div>
    </aside>
  );
}

export default function App() {
  return (
    <div className="flex h-screen flex-col overflow-hidden bg-[#4d4d4d] font-['Open_Sans',sans-serif]">
      <TitleBar />
      <MenuBar />
      <TabBar />
      <Toolbar />
      <div className="flex min-h-0 flex-1">
        <LeftRail />
        <DocumentPane />
        <ToolsPane />
      </div>
    </div>
  );
}
